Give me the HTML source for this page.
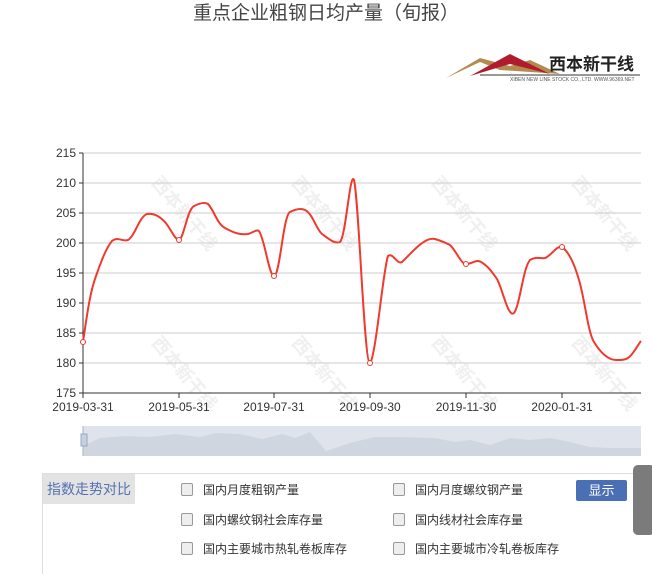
<!DOCTYPE html>
<html><head><meta charset="utf-8"><style>
body{margin:0;width:652px;height:559px;background:#fff;position:relative;overflow:hidden;font-family:"Liberation Sans","Noto Sans CJK SC",sans-serif}
.t{position:absolute;top:-2px;left:0;width:652px;text-align:center;font-size:19px;color:#444}
.wm{position:absolute;color:#f0f0f0;font-size:18px;font-weight:bold;transform:rotate(50deg);white-space:nowrap}
.p{position:absolute;left:42px;top:473px;width:620px;height:100px;border-top:1px solid #ddd;border-left:1px solid #ddd}
.lab{position:absolute;left:0;top:0;width:92px;height:30px;background:#e3e3e3;color:#5572b0;font-size:14px;line-height:30px;text-align:center}
.cb{position:absolute;font-size:12px;color:#333;line-height:16px}
.cb i{display:inline-block;width:10px;height:11px;border:1px solid #999;border-radius:2px;background:#eee;vertical-align:-2px;margin-right:10px}
.btn{position:absolute;left:533px;top:6px;width:51px;height:21px;background:#4b6fb5;color:#fff;font-size:13px;line-height:21px;text-align:center;border-radius:2px}
.sb{position:absolute;left:633px;top:465px;width:22px;height:70px;background:#7b7b7b;border-radius:5px}
</style></head><body>
<div class="t">重点企业粗钢日均产量（旬报）</div>
<svg style="position:absolute;left:440px;top:48px" width="212" height="36">
<polygon points="6,30 40,10 70,18 90,12 120,26 60,22 40,14" fill="#b38b4f"/>
<polygon points="30,28 70,6 110,26 70,16" fill="#b01c2e"/>
<line x1="40" y1="27" x2="200" y2="27" stroke="#333"/>
<text x="109" y="22" font-size="17" font-weight="bold" fill="#222" font-family="Noto Sans CJK SC">西本新干线</text>
<text x="70" y="33" font-size="5" fill="#555">XIBEN NEW LINE STOCK CO., LTD.    WWW.96369.NET</text>
</svg>
<div class="wm" style="left:140px;top:200px">西本新干线</div>
<div class="wm" style="left:280px;top:200px">西本新干线</div>
<div class="wm" style="left:420px;top:200px">西本新干线</div>
<div class="wm" style="left:560px;top:200px">西本新干线</div>
<div class="wm" style="left:140px;top:360px">西本新干线</div>
<div class="wm" style="left:280px;top:360px">西本新干线</div>
<div class="wm" style="left:420px;top:360px">西本新干线</div>
<div class="wm" style="left:560px;top:360px">西本新干线</div>
<svg style="position:absolute;left:0;top:0" width="652" height="470" font-size="12" fill="#333">
<g stroke="#ccc">
<line x1="83" y1="153" x2="641" y2="153"/><line x1="83" y1="183" x2="641" y2="183"/><line x1="83" y1="213" x2="641" y2="213"/><line x1="83" y1="243" x2="641" y2="243"/><line x1="83" y1="273" x2="641" y2="273"/><line x1="83" y1="303" x2="641" y2="303"/><line x1="83" y1="333" x2="641" y2="333"/><line x1="83" y1="363" x2="641" y2="363"/>
</g>
<g stroke="#333"><line x1="83" y1="153" x2="83" y2="393"/><line x1="83" y1="393" x2="641" y2="393"/>
<line x1="79" y1="153" x2="83" y2="153"/><line x1="79" y1="183" x2="83" y2="183"/><line x1="79" y1="213" x2="83" y2="213"/><line x1="79" y1="243" x2="83" y2="243"/><line x1="79" y1="273" x2="83" y2="273"/><line x1="79" y1="303" x2="83" y2="303"/><line x1="79" y1="333" x2="83" y2="333"/><line x1="79" y1="363" x2="83" y2="363"/><line x1="79" y1="393" x2="83" y2="393"/>
<line x1="83" y1="393" x2="83" y2="398"/><line x1="179" y1="393" x2="179" y2="398"/><line x1="274" y1="393" x2="274" y2="398"/><line x1="370" y1="393" x2="370" y2="398"/><line x1="466" y1="393" x2="466" y2="398"/><line x1="562" y1="393" x2="562" y2="398"/></g>
<g text-anchor="end"><text x="76" y="157">215</text><text x="76" y="187">210</text><text x="76" y="217">205</text><text x="76" y="247">200</text><text x="76" y="277">195</text><text x="76" y="307">190</text><text x="76" y="337">185</text><text x="76" y="367">180</text><text x="76" y="397">175</text></g>
<g text-anchor="middle"><text x="83" y="411">2019-03-31</text><text x="179" y="411">2019-05-31</text><text x="274" y="411">2019-07-31</text><text x="370" y="411">2019-09-30</text><text x="466" y="411">2019-11-30</text><text x="562" y="411">2020-01-31</text></g>
<path d="M83,342 C87,315 90,292 96,276 C101,262 106,248 112,241 C118,236 122,242 128,240 C135,236 139,217 147,214 C155,213 160,217 165,222 C171,229 175,240 179,240 C184,238 187,210 194,206 C200,203 205,202 208,204 C214,210 217,224 225,228 C234,233 240,235 248,234 C253,233 256,229 259,231 C265,240 269,276 274,276 C280,276 283,216 290,212 C296,209 301,208 305,210 C313,214 316,229 322,234 C330,240 335,244 340,242 C346,236 350,170 354,180 C359,200 364,363 370,363 C376,356 383,270 388,256 C393,252 397,265 402,262 C409,256 424,236 435,239 C442,241 446,243 450,245 C457,252 461,264 466,264 C472,264 476,259 481,262 C488,266 492,272 497,279 C503,290 508,318 514,313 C520,305 523,268 530,260 C536,256 541,259 545,258 C551,256 557,245 562,247 C569,252 575,266 579,280 C585,300 588,333 594,342 C600,352 608,360 616,360 C622,360 625,360 628,358 C633,355 637,346 641,341" fill="none" stroke="#f03a2e" stroke-width="2"/>
<g fill="#fff" stroke="#f03a2e"><circle cx="83" cy="342" r="2.5"/><circle cx="179" cy="240" r="2.5"/><circle cx="274" cy="276" r="2.5"/><circle cx="370" cy="363" r="2.5"/><circle cx="466" cy="264" r="2.5"/><circle cx="562" cy="247" r="2.5"/></g>
<rect x="83" y="426" width="558" height="30" fill="#dfe4ec"/>
<path d="M83,446 L100,438 L125,436 L150,437 L175,434 L200,437 L215,433 L240,434 L262,439 L282,434 L295,438 L310,432 L326,451 L350,443 L375,437 L400,437 L435,438 L455,442 L470,440 L490,445 L510,438 L530,440 L550,438 L570,442 L590,447 L610,448 L641,448 L641,456 L83,456Z" fill="#d0d6e0"/>
<line x1="83" y1="426" x2="83" y2="456" stroke="#a8b4c8"/>
<rect x="81" y="434" width="6" height="12" fill="#c6d0de" stroke="#9aa8c0"/>
</svg>
<div class="p"><div class="lab">指数走势对比</div>
<div class="cb" style="left:138px;top:8px"><i></i>国内月度粗钢产量</div>
<div class="cb" style="left:350px;top:8px"><i></i>国内月度螺纹钢产量</div>
<div class="cb" style="left:138px;top:38px"><i></i>国内螺纹钢社会库存量</div>
<div class="cb" style="left:350px;top:38px"><i></i>国内线材社会库存量</div>
<div class="cb" style="left:138px;top:67px"><i></i>国内主要城市热轧卷板库存</div>
<div class="cb" style="left:350px;top:67px"><i></i>国内主要城市冷轧卷板库存</div>
<div class="btn">显示</div></div>
<div class="sb"></div>
</body></html>
